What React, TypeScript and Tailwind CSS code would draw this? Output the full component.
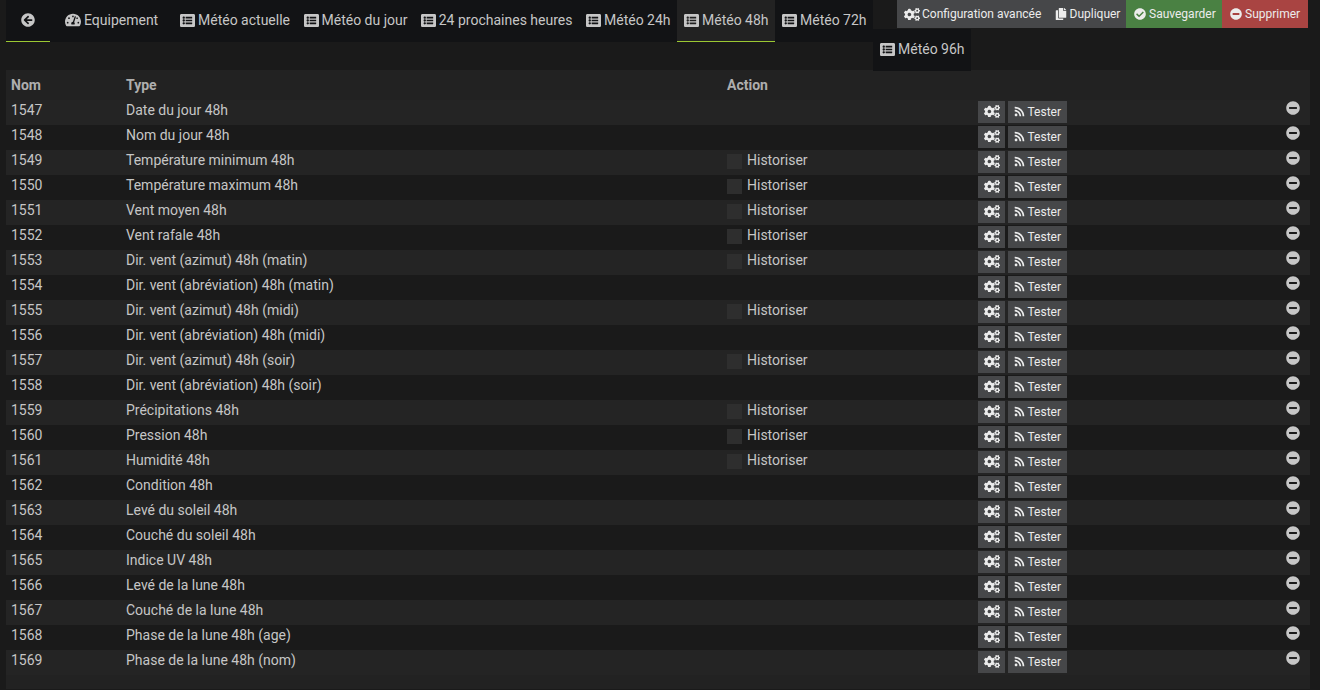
import React from 'react';
import {
  FaArrowCircleLeft,
  FaCheckCircle,
  FaCogs,
  FaCopy,
  FaListAlt,
  FaMinusCircle,
  FaRss,
  FaTachometerAlt,
} from 'react-icons/fa';

type Command = { id: number; name: string; log?: boolean };

const commands: Command[] = [
  { id: 1547, name: 'Date du jour 48h' },
  { id: 1548, name: 'Nom du jour 48h' },
  { id: 1549, name: 'Température minimum 48h', log: true },
  { id: 1550, name: 'Température maximum 48h', log: true },
  { id: 1551, name: 'Vent moyen 48h', log: true },
  { id: 1552, name: 'Vent rafale 48h', log: true },
  { id: 1553, name: 'Dir. vent (azimut) 48h (matin)', log: true },
  { id: 1554, name: 'Dir. vent (abréviation) 48h (matin)' },
  { id: 1555, name: 'Dir. vent (azimut) 48h (midi)', log: true },
  { id: 1556, name: 'Dir. vent (abréviation) 48h (midi)' },
  { id: 1557, name: 'Dir. vent (azimut) 48h (soir)', log: true },
  { id: 1558, name: 'Dir. vent (abréviation) 48h (soir)' },
  { id: 1559, name: 'Précipitations 48h', log: true },
  { id: 1560, name: 'Pression 48h', log: true },
  { id: 1561, name: 'Humidité 48h', log: true },
  { id: 1562, name: 'Condition 48h' },
  { id: 1563, name: 'Levé du soleil 48h' },
  { id: 1564, name: 'Couché du soleil 48h' },
  { id: 1565, name: 'Indice UV 48h' },
  { id: 1566, name: 'Levé de la lune 48h' },
  { id: 1567, name: 'Couché de la lune 48h' },
  { id: 1568, name: 'Phase de la lune 48h (age)' },
  { id: 1569, name: 'Phase de la lune 48h (nom)' },
];

const tabs = [
  { label: 'Météo actuelle', width: 'w-[123.5px]' },
  { label: 'Météo du jour', width: 'w-[117.25px]' },
  { label: '24 prochaines heures', width: 'w-[165.25px]' },
  { label: 'Météo 24h', width: 'w-[98px]' },
  { label: 'Météo 48h', width: 'w-[98px]', active: true },
  { label: 'Météo 72h', width: 'w-[98px]' },
];

function Tab({ label, width, active }: { label: string; width: string; active?: boolean }) {
  return (
    <a
      className={`flex h-[42px] shrink-0 items-center gap-[3px] border-b pb-px pl-[7px] ${width} ${
        active ? 'border-[#9bc832] bg-[#222222]' : 'border-transparent bg-[#121315]'
      }`}
    >
      <FaListAlt className="size-[15px] shrink-0" />
      <span className="whitespace-nowrap">{label}</span>
    </a>
  );
}

function Header() {
  return (
    <header className="flex h-[70px] items-start pl-1.5">
      <nav className="flex h-[42px] w-[867px] shrink-0 bg-[#121315]">
        <a className="mr-2 flex h-[42px] w-11 items-center justify-center border-b border-[#9bc832] pb-px">
          <FaArrowCircleLeft className="size-[14px]" />
        </a>
        <a className="flex h-[42px] w-[115px] items-center gap-[3px] pb-0.5 pl-[7px]">
          <FaTachometerAlt className="size-4" />
          <span>Equipement</span>
        </a>
        {tabs.map((t) => (
          <Tab key={t.label} {...t} />
        ))}
      </nav>
      <div className="flex flex-1 flex-col">
        <div className="flex h-7 pl-6 text-xs text-[#ececec]">
          <button className="flex w-[152px] items-center gap-0.5 bg-[#464749] pl-[7px]">
            <FaCogs className="h-[13px] w-4" />
            <span>Configuration avancée</span>
          </button>
          <button className="flex w-[77px] items-center gap-[3px] bg-[#464749] pl-[5.5px]">
            <FaCopy className="size-3" />
            <span>Dupliquer</span>
          </button>
          <button className="flex w-24 items-center gap-[3px] bg-[#4a8143] pl-2">
            <FaCheckCircle className="size-3" />
            <span>Sauvegarder</span>
          </button>
          <button className="flex w-[86px] items-center gap-[3px] bg-[#a94442] pl-2">
            <FaMinusCircle className="size-3" />
            <span>Supprimer</span>
          </button>
        </div>
        <div className="relative z-10 mt-px flex">
          <Tab label="Météo 96h" width="w-[98px]" />
        </div>
      </div>
    </header>
  );
}

const columns = 'grid grid-cols-[115px_601px_251px_308px_1fr] pl-[5px]';

function Row({ command, striped }: { command: Command; striped: boolean }) {
  return (
    <div className={`h-[25px] ${columns} ${striped ? 'bg-[#242424]' : 'bg-[#1a1a1a]'}`}>
      <span>{command.id}</span>
      <span>{command.name}</span>
      <div className="flex">
        {command.log && (
          <label className="flex gap-[5px]">
            <span className="mt-1 size-[15px] bg-[#2e2e2e]" />
            <span>Historiser</span>
          </label>
        )}
      </div>
      <div className="flex items-start gap-[3px] pt-px text-xs text-[#ececec]">
        <button className="flex h-[22px] w-[27px] items-center bg-[#464749] pb-px pl-[5.5px]">
          <FaCogs className="h-[13px] w-4" />
        </button>
        <button className="flex h-[22px] w-[59px] items-center gap-[2.5px] bg-[#464749] pl-1.5">
          <FaRss className="mb-px size-[11px]" />
          <span>Tester</span>
        </button>
      </div>
      <div className="pt-px">
        <FaMinusCircle className="size-[14px]" />
      </div>
    </div>
  );
}

export default function App() {
  return (
    <div className="h-[690px] w-[1320px] overflow-hidden bg-[#1a1a1a] font-['Roboto',sans-serif] text-sm leading-5 text-[#c6c6c6]">
      <Header />
      <main className="ml-1.5 mr-2.5 h-[619px] bg-[#222222]">
        <div className={`h-[30px] pt-[5px] font-bold text-[#aeaeae] ${columns}`}>
          <span>Nom</span>
          <span>Type</span>
          <span>Action</span>
        </div>
        {commands.map((c, i) => (
          <Row key={c.id} command={c} striped={i % 2 === 0} />
        ))}
      </main>
    </div>
  );
}
